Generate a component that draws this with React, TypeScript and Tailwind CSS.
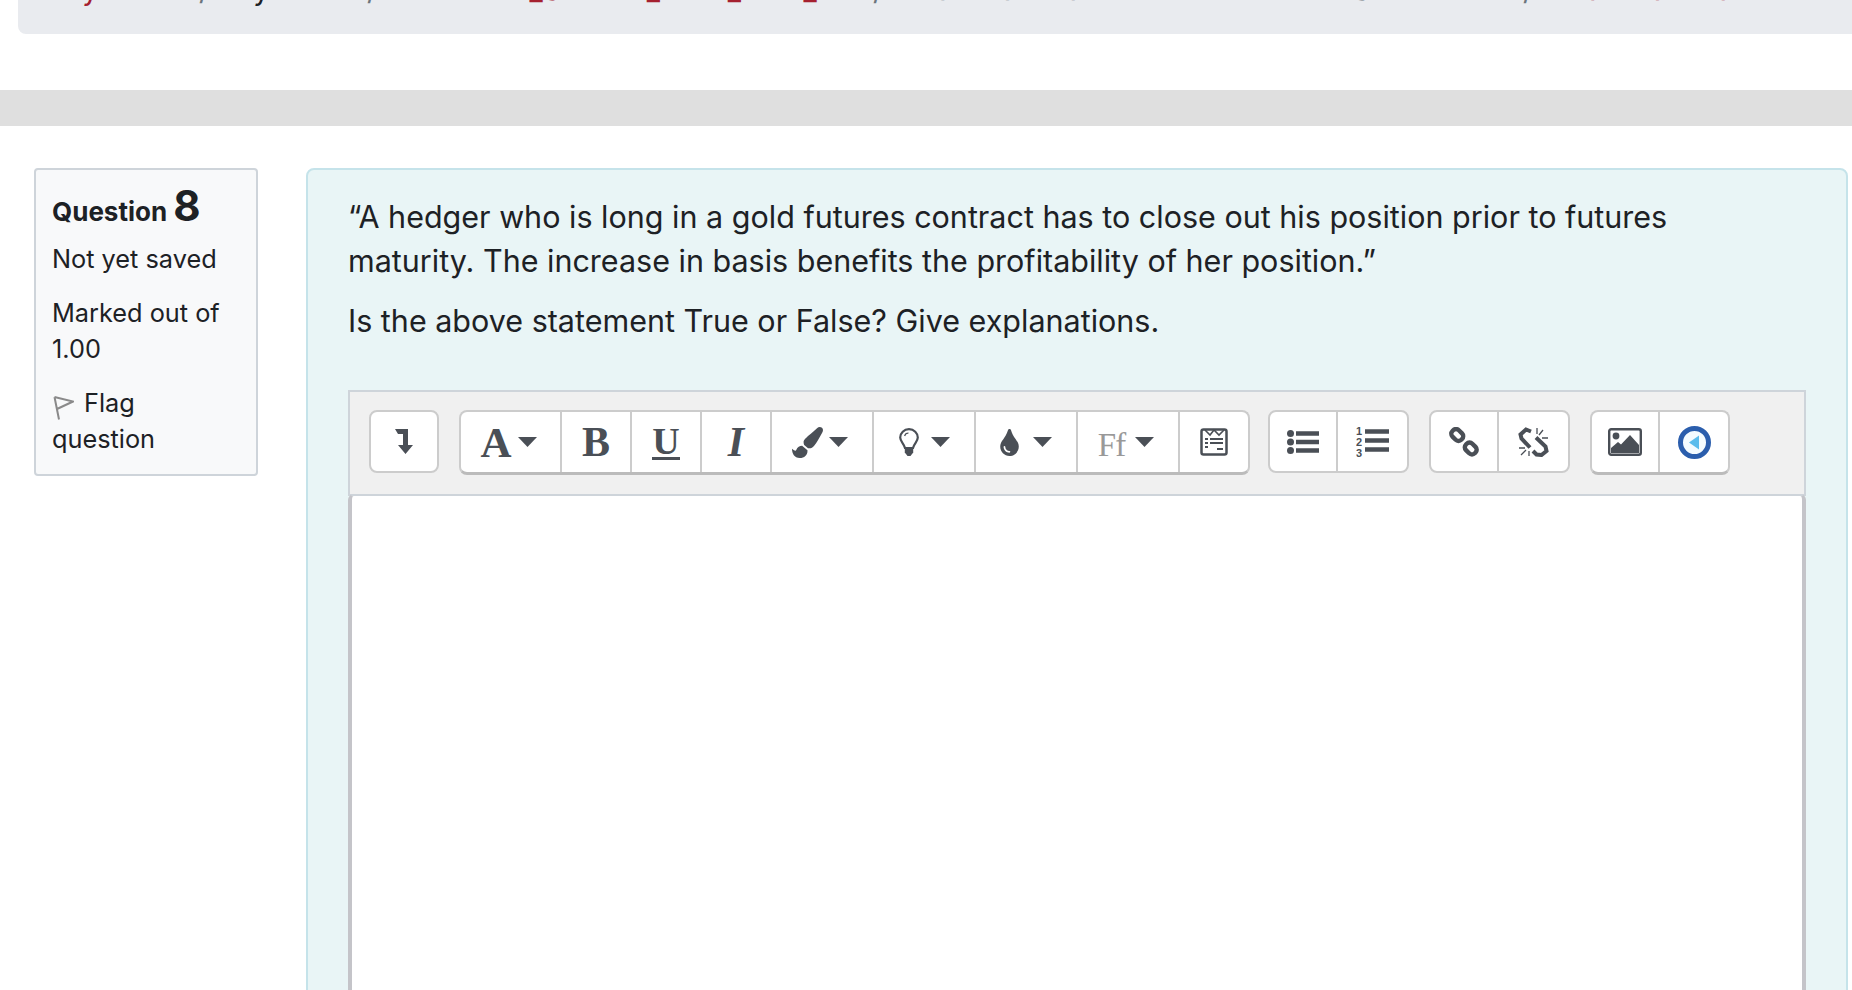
import type { ReactNode } from "react";
import { FaPaintBrush, FaTint } from "react-icons/fa";

const Caret = () => (
  <svg width="19" height="10" viewBox="0 0 19 10" className="block shrink-0">
    <path d="M0 0H19L9.5 10Z" fill="#4a4f56" />
  </svg>
);

const ToolButton = ({ w, last, children }: { w: string; last?: boolean; children: ReactNode }) => (
  <div className={`flex h-full items-center justify-center ${w} ${last ? "" : "border-r-2 border-[#cccccc]"}`}>
    {children}
  </div>
);

const Group = ({ children }: { children: ReactNode }) => (
  <div className="flex h-[65px] rounded-[8px] border-x-2 border-t-2 border-b-[3px] border-x-[#cccccc] border-t-[#cccccc] border-b-[#bbbbbb] bg-white">
    {children}
  </div>
);

const PlainGroup = ({ children }: { children: ReactNode }) => (
  <div className="flex h-[63px] rounded-[8px] border-2 border-[#cccccc] bg-white">{children}</div>
);

const serif = "font-['Liberation_Serif',serif] text-[#4a4f56]";

const App = () => {
  return (
    <div className="h-[990px] overflow-hidden bg-white font-['Inter',sans-serif] text-[#1d2125]">
      {/* breadcrumb, scrolled almost out of view */}
      <div className="-mt-[32px] ml-[18px] flex h-[66px] items-start overflow-hidden rounded-bl-[8px] bg-[#e9ebef] pl-[38px] text-[29px] leading-[44px] whitespace-nowrap">
        <a className="w-[143px] text-[#a5202f]">My home</a>
        <span className="w-[28px] text-[#6c757d]">/</span>
        <span className="w-[140px]">My units</span>
        <span className="w-[25px] text-[#6c757d]">/</span>
        <a className="w-[481px] text-[#a5202f]">FNCE3011_SEM011_T1AB_G011_A</a>
        <span className="w-[22px] text-[#6c757d]">/</span>
        <span className="w-[628px] text-[#6c757d]">Final Examination Assessment to Section 1</span>
        <span className="w-[22px] text-[#6c757d]">/</span>
        <a className="text-[#a5202f]">Final Examination</a>
      </div>

      <div className="mt-[56px] h-[36px] bg-[#dfdfdf]" />

      <div className="mt-[42px] flex items-start">
        <aside className="ml-[34px] w-[224px] shrink-0 rounded-[4px] border-2 border-[#ced4da] bg-[#f8f9fa] px-[16px] pt-[16px] pb-[18px] text-[25.3px] leading-[35.5px]">
          <h3 className="text-[26px] font-bold">
            Question <span className="text-[42px] leading-[40px] font-bold">8</span>
          </h3>
          <p className="mt-[11px]">Not yet saved</p>
          <p className="mt-[19px]">Marked out of 1.00</p>
          <p className="mt-[19px]">
            <svg width="22" height="26" viewBox="0 0 22 26" className="mr-[10px] mb-[-6px] inline-block">
              <path d="M2.5 2L7 24.5M2.5 2L21 6.5L5 14" fill="none" stroke="#8a8a8a" strokeWidth="2" />
            </svg>
            Flag question
          </p>
        </aside>

        <main className="ml-[48px] h-[900px] w-[1542px] shrink-0 rounded-[8px] border-2 border-[#c5e3ea] bg-[#e9f5f6] px-[40px] pt-[25px] text-[30.5px] leading-[44px]">
          <p className="max-w-[1440px]">
            “A hedger who is long in a gold futures contract has to close out his position prior to futures maturity. The increase in basis benefits the profitability of her position.”
          </p>
          <p className="mt-[16px]">Is the above statement True or False? Give explanations.</p>

          <div className="mt-[47px] h-[600px] w-[1458px]">
            <div className="flex h-[106px] gap-[20px] border-2 border-[#ced4da] bg-[#f0f0f0] pt-[18px] pl-[19px]">
              <div className="flex h-[63px] w-[70px] items-center justify-center rounded-[8px] border-2 border-[#cccccc] bg-white">
                <svg width="18" height="25" viewBox="0 0 18 25">
                  <path d="M0 0H13V16H18L10.5 25L3 16H8V5H3Z" fill="#4a4f56" />
                </svg>
              </div>

              <Group>
                <ToolButton w="w-[101px]">
                  <span className={`${serif} mr-[6px] -ml-[4px] text-[43px] leading-none font-bold`}>A</span>
                  <Caret />
                </ToolButton>
                <ToolButton w="w-[70px]">
                  <span className={`${serif} text-[42px] leading-none font-bold`}>B</span>
                </ToolButton>
                <ToolButton w="w-[70px]">
                  <span className={`${serif} border-b-[3px] border-[#4a4f56] text-[38px] leading-[32px] font-bold`}>U</span>
                </ToolButton>
                <ToolButton w="w-[70px]">
                  <span className={`${serif} text-[42px] leading-none font-bold italic`}>I</span>
                </ToolButton>
                <ToolButton w="w-[102px]">
                  <FaPaintBrush className="mr-[6px] -ml-[4px] text-[31px] text-[#4a4f56]" />
                  <Caret />
                </ToolButton>
                <ToolButton w="w-[102px]">
                  <svg width="20" height="28" viewBox="0 0 20 28" className="mr-[12px]">
                    <path d="M10 1.2C5 1.2 1.2 5 1.2 9.6C1.2 13.4 5 15.5 6 20H14C15 15.5 18.8 13.4 18.8 9.6C18.8 5 15 1.2 10 1.2Z" fill="none" stroke="#4a4f56" strokeWidth="2.2" />
                    <path d="M5.8 19H14.2V24.5L11.5 28H8.5L5.8 24.5Z" fill="#4a4f56" />
                    <path d="M9.5 5C7.5 5 6 6.3 5.6 8" fill="none" stroke="#4a4f56" strokeWidth="1.2" />
                  </svg>
                  <Caret />
                </ToolButton>
                <ToolButton w="w-[102px]">
                  <FaTint className="mr-[10px] -ml-[4px] text-[27px] text-[#4a4f56]" />
                  <Caret />
                </ToolButton>
                <ToolButton w="w-[102px]">
                  <span className="mt-[6px] mr-[10px] -ml-[4px] font-['Liberation_Serif',serif] text-[33px] leading-none tracking-[-1px] text-[#999999]">Ff</span>
                  <Caret />
                </ToolButton>
                <ToolButton w="w-[68px]" last>
                  <svg width="28" height="28" viewBox="0 0 28 28">
                    <rect x="1.5" y="1.5" width="25" height="25" rx="2" fill="none" stroke="#4a4f56" strokeWidth="2.5" />
                    <path d="M5 2L10 7L14 2L19 7L24 2" fill="none" stroke="#4a4f56" strokeWidth="1.6" />
                    <path d="M5 11H8M10 11H23M5 15H8M10 15H23M5 19H8M17 21H23" stroke="#4a4f56" strokeWidth="2" />
                  </svg>
                </ToolButton>
              </Group>

              <div className="-ml-[2px]">
                <PlainGroup>
                  <ToolButton w="w-[68px]">
                    <svg width="32" height="24" viewBox="0 0 32 24">
                      <circle cx="3.5" cy="3.5" r="3.5" fill="#4a4f56" />
                      <circle cx="3.5" cy="12" r="3.5" fill="#4a4f56" />
                      <circle cx="3.5" cy="20.5" r="3.5" fill="#4a4f56" />
                      <path d="M9 3.5H32M9 12H32M9 20.5H32" stroke="#4a4f56" strokeWidth="4.5" />
                    </svg>
                  </ToolButton>
                  <ToolButton w="w-[69px]" last>
                    <svg width="33" height="31" viewBox="0 0 33 31">
                      <text x="0" y="9" fontFamily="Liberation Sans" fontWeight="700" fontSize="11" fill="#4a4f56">1</text>
                      <text x="0" y="19.5" fontFamily="Liberation Sans" fontWeight="700" fontSize="11" fill="#4a4f56">2</text>
                      <text x="0" y="30.5" fontFamily="Liberation Sans" fontWeight="700" fontSize="11" fill="#4a4f56">3</text>
                      <path d="M9 5.5H33M9 14.5H33M9 23.5H33" stroke="#4a4f56" strokeWidth="4.5" />
                    </svg>
                  </ToolButton>
                </PlainGroup>
              </div>

              <PlainGroup>
                <ToolButton w="w-[68px]">
                  <svg width="30" height="30" viewBox="0 0 30 30">
                    <rect x="2" y="3.5" width="12.5" height="9" rx="4" transform="rotate(45 8.25 8)" fill="none" stroke="#4a4f56" strokeWidth="4.4" />
                    <rect x="15.5" y="17" width="12.5" height="9" rx="4" transform="rotate(45 21.75 21.5)" fill="none" stroke="#4a4f56" strokeWidth="4.4" />
                  </svg>
                </ToolButton>
                <ToolButton w="w-[69px]" last>
                  <svg width="31" height="30" viewBox="0 0 31 30">
                    <path d="M13 4.5L8 2.5L2.5 7.5L3.5 11.5L12 20.5" fill="none" stroke="#4a4f56" strokeWidth="4" />
                    <path d="M18 10.5L27.5 19.5L28.5 24L23.5 28L18.5 27.5L15 24" fill="none" stroke="#4a4f56" strokeWidth="4" />
                    <path d="M19 1V7M25 3L21 8M30 11H24M1 21H7M3 28L8 23M11 29V24" stroke="#4a4f56" strokeWidth="1.3" />
                  </svg>
                </ToolButton>
              </PlainGroup>

              <Group>
                <ToolButton w="w-[68px]">
                  <svg width="34" height="28" viewBox="0 0 34 28">
                    <rect x="1.2" y="1.2" width="31.6" height="25.6" rx="2" fill="none" stroke="#4a4f56" strokeWidth="2.4" />
                    <circle cx="8" cy="8" r="3.4" fill="#4a4f56" />
                    <path d="M3 25V20L10 14L13 16.5L22 7L31 17V25Z" fill="#4a4f56" />
                  </svg>
                </ToolButton>
                <ToolButton w="w-[68px]" last>
                  <svg width="33" height="33" viewBox="0 0 33 33">
                    <circle cx="16.5" cy="16.5" r="14" fill="#f4fbff" stroke="#2b5ead" strokeWidth="5" />
                    <path d="M21 9.5V23.5L11 16.5Z" fill="#5bbcec" />
                  </svg>
                </ToolButton>
              </Group>
            </div>
            <div className="-mt-[2px] h-[600px] rounded-t-[6px] border-x-4 border-t-2 border-x-[#c4c4c9] border-t-[#ced4da] bg-white" />
          </div>
        </main>
      </div>
    </div>
  );
};

export default App;
